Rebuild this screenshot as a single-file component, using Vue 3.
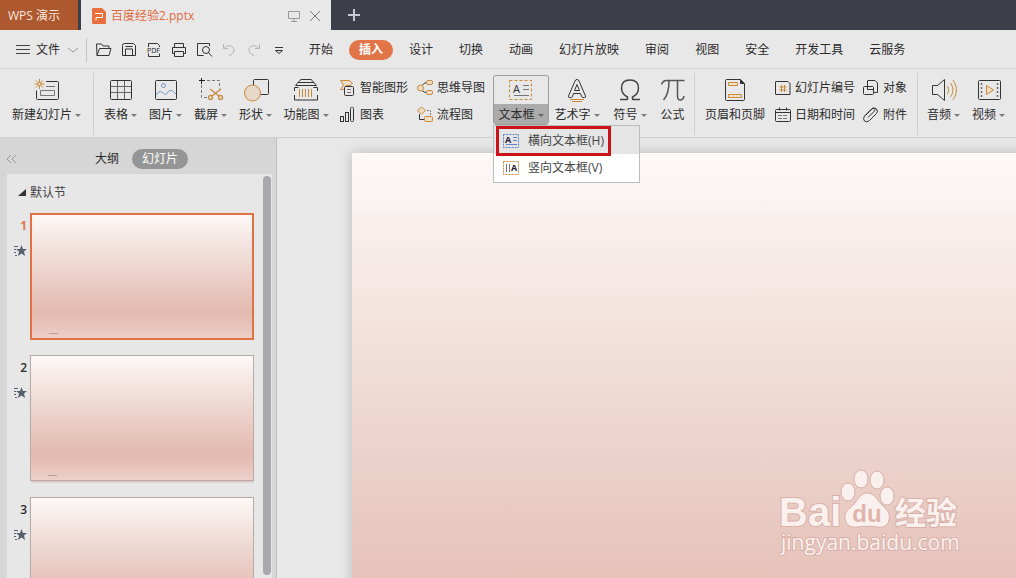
<script setup>
const menuTabs = ['开始', '插入', '设计', '切换', '动画', '幻灯片放映', '审阅', '视图', '安全', '开发工具', '云服务']
const quickTools = [
  { icon: 'open', label: '打开' },
  { icon: 'save', label: '保存' },
  { icon: 'pdf', label: '输出为PDF' },
  { icon: 'print', label: '打印' },
  { icon: 'preview', label: '打印预览' },
  { icon: 'undo', label: '撤消' },
  { icon: 'redo', label: '恢复' },
  { icon: 'more', label: '自定义' }
]
const insertTools = [
  { icon: 'table', label: '表格' },
  { icon: 'picture', label: '图片' },
  { icon: 'clip', label: '截屏' },
  { icon: 'shape', label: '形状' },
  { icon: 'widget', label: '功能图', wide: true }
]
const diagramTools = [
  [{ icon: 'smart', label: '智能图形' }, { icon: 'chart', label: '图表' }],
  [{ icon: 'mind', label: '思维导图' }, { icon: 'flow', label: '流程图' }]
]
const pageTools = [
  [{ icon: 'number', label: '幻灯片编号' }, { icon: 'date', label: '日期和时间' }],
  [{ icon: 'object', label: '对象' }, { icon: 'attach', label: '附件' }]
]
const mediaTools = [
  { icon: 'audio', label: '音频' },
  { icon: 'video', label: '视频' }
]
const slides = [1, 2, 3]

const o = 'stroke="#c98a3c"'
const large = {
  newslide: `<path d="M13 5.5h11.500q1 0 1 1v16q0 1-1 1h-20q-1 0-1-1v-8"/><path d="M13 10.500h9" stroke="#777"/><path d="M7.500 14.500h14v5h-14z" stroke="#777"/><path d="M6.500 3v10M1.500 8h10M3 4.500l7 7M10 4.500l-7 7" ${o}/><circle cx="6.500" cy="8" r="1.500" fill="#fff3df" ${o}/>`,
  table: `<rect x="3.500" y="4.500" width="21" height="19" rx="1"/><path d="M10.500 5v18M17.500 5v18M4 10.500h20M4 16.500h20" stroke="#666"/>`,
  picture: `<rect x="3.500" y="4.500" width="21" height="19" rx="1"/><circle cx="11.500" cy="9.500" r="2" stroke="#6e8fc9"/><path d="M4 19c3-4 5-4 7-2s3 2 5-1 4-2 8 2" stroke="#6e8fc9"/>`,
  clip: `<path d="M10 4.500h12.500v8M4.500 9v12.500h6" stroke="#777" stroke-dasharray="3 2"/><path d="M4.500 2v6M2 4.500h6" stroke="#222"/><g stroke="#c98a3c" stroke-width="1.300"><circle cx="13.500" cy="21.500" r="2"/><circle cx="23.500" cy="21.500" r="2"/><path d="M15 20l9-7M22 20l-9-7"/></g>`,
  shape: `<rect x="11.500" y="3.500" width="15" height="15" rx="1"/><circle cx="10.500" cy="17" r="8" fill="#e6d8c8" ${o}/>`,
  widget: `<path d="M8.500 3.500h11M6 6.500h16M6 6.500l3-3M22 6.500l-3-3M3.500 9.500h21M3.500 9.500l2.500-3M24.500 9.500l-2.500-3M2.500 15v-3.500h4M25.500 15v-3.500h-4M2.500 19v5h4M25.500 19v5h-4M6 24h16"/><path d="M7.500 13v8M10.500 13v8M13.500 13v8M16.500 13v8M19.500 13v8" ${o}/>`,
  textbox: `<rect x="2.500" y="4.500" width="22" height="19" stroke-dasharray="3 2" ${o}/><text x="6" y="17" font-size="11" fill="#333" stroke="none">A</text><path d="M16 9.500h6M16 13.500h6M7 19.500h15" stroke="#777"/>`,
  wordart: `<path d="M14 3.500q1.500 0 2 1.500l6.500 15q.5 1.500-1 1.500h-1.500q-1 0-1.500-1l-1-3h-7l-1 3q-.5 1-1.500 1H6.500q-1.500 0-1-1.500L12 5q.5-1.500 2-1.500z"/><path d="M14 8.500l-2.500 6h5z"/><path d="M7 23.500h14M9 25.500h10" ${o}/>`,
  symbol: `<path d="M4 23.500h7q.5 0 .5-.5v-2q-6-3-6-9 0-8 8.500-8t8.500 8q0 6-6 9v2q0 .5.500.5h7" stroke="#444" stroke-width="1.500"/>`,
  formula: `<path d="M2.500 8.500q1.500-4 5-4h18M10 5q0 13-5.500 19M18.500 5v15q0 4.500 3.500 4 2.500-.5 3-4" stroke="#555" stroke-width="1.500"/>`,
  header: `<path d="M5.500 3.500h14l4 4v16q0 1-1 1h-17q-1 0-1-1v-19q0-1 1-1z"/><path d="M19.500 3.500v4h4z" fill="#333"/><path d="M7.500 6.500h9v3h-9zM7.500 18.500h13v3h-13z" fill="#f3dfc4" ${o}/>`,
  audio: `<path d="M2.500 9.500h5l7-6v21l-7-6h-5z" stroke-linejoin="round"/><path d="M17.500 10q2.500 4 0 8M20.500 7q5 7 0 14M23 4q7 10 0 20" ${o}/>`,
  video: `<rect x="3.500" y="4.500" width="22" height="19" rx="1"/><path d="M6.500 7v15M22.500 7v15" stroke="#667" stroke-width="1.500" stroke-dasharray="2 2"/><path d="M11.500 9.500l7 4.500-7 4.500z" fill="#f3dfc4" ${o}/>`
}
const small = {
  smart: `<path d="M1.500 1.500h9l3 3-2.500 2H7v4H1.500l3-4.500z" fill="#f0dfc8" ${o}/><rect x="5.500" y="7.500" width="9" height="9" rx="1" fill="#e8e8e8"/><path d="M8 10.500h4M8 13.500h4" stroke="#777"/>`,
  chart: `<rect x="1.500" y="10.500" width="3" height="5"/><rect x="6.500" y="6.500" width="3" height="9"/><rect x="11.500" y="1.500" width="3" height="14" rx="1"/>`,
  mind: `<path d="M6 6.500q2-3 5-3M6 11.500q2 2 5 2"/><circle cx="4.500" cy="9" r="3" fill="#f0dfc8" ${o}/><rect x="10.500" y="1.500" width="6" height="4" rx="1.500" fill="#f0dfc8" ${o}/><rect x="10.500" y="11.500" width="6" height="4" rx="1.500" fill="#f0dfc8" ${o}/>`,
  flow: `<path d="M3.500 8v5.500h5"/><path d="M11 4.500h3.500v6" stroke="#777" stroke-dasharray="2 1"/><path d="M5.500 1l4 3.500-4 3.500-4-3.500z" fill="#f0dfc8" ${o}/><rect x="8.500" y="10.500" width="8" height="5" rx="1" fill="#f0dfc8" ${o}/>`,
  number: `<path d="M2 2.500h12l2 2v11.000H2q-.5 0-.5-.500v-12q0-.5.500-.5z"/><path d="M7.500 6v7M10.500 6v7M5.500 8h7M5.500 11h7" ${o}/>`,
  date: `<rect x="1.500" y="3.500" width="15" height="12" rx="1"/><path d="M2 6.500h14M5.500 1.500v3M12.500 1.500v3"/><path d="M4 9.500h10M4 12.500h10" stroke="#777" stroke-dasharray="4 1"/>`,
  object: `<path d="M5.500 7v-5q0-.5.500-.5h7l2.500 2.500v9.500h-4"/><rect x="1.500" y="7.500" width="10" height="8" rx="1"/><path d="M5.500 7.500v3h6"/>`,
  attach: `<path d="M3.500 9.500l6.500-6.500q2.500-2 4.500 0t0 4.500l-7 7q-3 2.500-5 .5t0-5l7.500-7.500q1.500-1 2.500 0t0 2.500l-6.500 6.500"/>`,
  boxH: `<rect x="1.500" y="2.500" width="15" height="13" stroke="#5d82c4" stroke-dasharray="2 1"/><text x="3" y="11" font-size="9" font-weight="bold" fill="#223" stroke="none">A</text><path d="M11 5.500h4M11 8.500h4M4 12.500h11" stroke="#5d82c4"/>`,
  boxV: `<rect x="1.500" y="2.500" width="15" height="13" ${o} stroke-dasharray="2 1"/><path d="M4.500 5v8M7.500 5v8" stroke="#777"/><text x="9" y="12" font-size="9" font-weight="bold" fill="#223" stroke="none">A</text>`,
  burger: `<path d="M1 4.500h14M1 8.500h14M1 12.500h14" stroke="#444"/>`,
  chevron: `<path d="M4 7l5 4 5-4" stroke="#999"/>`,
  open: `<path d="M2 14.500l-.5-11.500h5l1.500 2h6v2.500M2 14.500h12l2-7H4.500z" stroke-linejoin="round"/>`,
  save: `<path d="M4.500 2.500h9l2 2v10h-13v-10q0-2 2-2z" stroke-linejoin="round"/><path d="M5.500 14v-6h7v6M5.500 5.500h7"/>`,
  pdf: `<path d="M3.500 6v-3.500h9l2 2V6M3.500 12.500v3h11v-3"/><text x="2" y="12" font-size="7" fill="#222" stroke="none">PDF</text>`,
  print: `<path d="M4.500 6v-3.500h9V6M4.500 12.500h-2v-6h13v6h-2M4.500 10.500h9v5h-9z" stroke-linejoin="round"/>`,
  preview: `<path d="M14.500 5v-2.500h-12v12h6"/><circle cx="11" cy="9" r="3.500"/><path d="M13.500 11.500l3.500 4"/>`,
  undo: `<path d="M3.500 3v4.500h4.500M4 7c4-4 10-2 10 2 0 3-2 4.500-5 5.500" stroke="#b5b5b5"/>`,
  redo: `<path d="M14.500 3v4.500h-4.500M14 7c-4-4-10-2-10 2 0 3 2 4.500 5 5.500" stroke="#b5b5b5"/>`,
  more: `<path d="M5 6.500h8M5.500 9.500l3.500 3 3.500-3z"/>`
}
</script>

<template>
  <div class="app">
    <header class="titlebar">
      <button class="home">WPS 演示</button>
      <div class="doc">
        <svg class="doc-logo" viewBox="0 0 14 16" width="14" height="16" aria-hidden="true">
          <path d="M1 0h9l4 4v11q0 1-1 1H1q-1 0-1-1V1q0-1 1-1z" fill="#e96f3c" />
          <path d="M3 5.500h7.500v4H4v3" fill="none" stroke="#fff" />
        </svg>
        <span class="doc-name">百度经验2.pptx</span>
        <button class="plain" aria-label="放映">
          <svg viewBox="0 0 12 12" width="12" height="12" class="line grey"><path d="M.5 1.500h11v7H.5zM6 9v2.500M3 11.500h6" /></svg>
        </button>
        <button class="plain" aria-label="关闭">
          <svg viewBox="0 0 12 12" width="12" height="12" class="line dim"><path d="M1 1l10 10M11 1L1 11" /></svg>
        </button>
      </div>
      <button class="plain add" aria-label="新建">
        <svg viewBox="0 0 12 12" width="12" height="12" class="line light"><path d="M6 0v12M0 6h12" /></svg>
      </button>
    </header>

    <nav class="menubar">
      <button class="file">
        <svg viewBox="0 0 16 18" width="16" height="18" class="line" v-html="small.burger" />
        文件
        <svg viewBox="0 0 18 18" width="18" height="18" class="line" v-html="small.chevron" />
      </button>
      <div class="quick">
        <button v-for="t in quickTools" :key="t.icon" class="plain" :aria-label="t.label">
          <svg viewBox="0 0 18 18" width="18" height="18" class="line" v-html="small[t.icon]" />
        </button>
      </div>
      <button v-for="t in menuTabs" :key="t" class="tab" :class="{ active: t === '插入' }">{{ t }}</button>
    </nav>

    <section class="ribbon">
      <div class="group first">
        <button class="big">
          <svg viewBox="0 0 28 28" class="line" v-html="large.newslide" />
          <span class="label drop">新建幻灯片</span>
        </button>
      </div>
      <div class="group insert">
        <button v-for="t in insertTools" :key="t.icon" class="big" :class="{ wide: t.wide }">
          <svg viewBox="0 0 28 28" class="line" v-html="large[t.icon]" />
          <span class="label drop">{{ t.label }}</span>
        </button>
        <div v-for="(col, i) in diagramTools" :key="i" class="column">
          <button v-for="t in col" :key="t.icon" class="row">
            <svg viewBox="0 0 18 18" class="line" v-html="small[t.icon]" />{{ t.label }}
          </button>
        </div>
        <div class="menu-host">
          <button class="big textbox" aria-haspopup="menu" aria-expanded="true">
            <svg viewBox="0 0 28 28" class="line" v-html="large.textbox" />
            <span class="label drop">文本框</span>
          </button>
          <div class="menu" role="menu">
            <button role="menuitem" class="item hot">
              <span class="marked"><svg viewBox="0 0 18 18" class="line" v-html="small.boxH" />横向文本框(H)</span>
            </button>
            <button role="menuitem" class="item">
              <span class="content"><svg viewBox="0 0 18 18" class="line" v-html="small.boxV" />竖向文本框(V)</span>
            </button>
          </div>
        </div>
        <button class="big wide">
          <svg viewBox="0 0 28 28" class="line" v-html="large.wordart" />
          <span class="label drop">艺术字</span>
        </button>
        <button class="big mid">
          <svg viewBox="0 0 28 28" class="line" v-html="large.symbol" />
          <span class="label drop">符号</span>
        </button>
        <button class="big narrow">
          <svg viewBox="0 0 28 28" class="line" v-html="large.formula" />
          <span class="label">公式</span>
        </button>
      </div>
      <div class="group page">
        <button class="big header">
          <svg viewBox="0 0 28 28" class="line" v-html="large.header" />
          <span class="label">页眉和页脚</span>
        </button>
        <div v-for="(col, i) in pageTools" :key="i" class="column">
          <button v-for="t in col" :key="t.icon" class="row">
            <svg viewBox="0 0 18 18" class="line" v-html="small[t.icon]" />{{ t.label }}
          </button>
        </div>
      </div>
      <div class="group media">
        <button v-for="t in mediaTools" :key="t.icon" class="big">
          <svg viewBox="0 0 28 28" class="line" v-html="large[t.icon]" />
          <span class="label drop">{{ t.label }}</span>
        </button>
      </div>
    </section>

    <main class="work">
      <aside class="panel">
        <div class="panel-head">
          <button class="plain collapse" aria-label="收起">
            <svg viewBox="0 0 12 10" width="12" height="10" class="line grey"><path d="M5 1L1 5l4 4M10 1L6 5l4 4" /></svg>
          </button>
          <button class="plain outline">大纲</button>
          <button class="plain pill">幻灯片</button>
        </div>
        <div class="list">
          <div class="thumbs">
            <button class="plain section">
              <svg viewBox="0 0 8 8" width="8" height="8"><path d="M8 0v7H0z" fill="#333" /></svg>默认节
            </button>
            <div v-for="n in slides" :key="n" class="entry" :class="{ current: n === 1 }">
              <div class="meta">
                <span>{{ n }}</span>
                <svg viewBox="0 0 14 12" width="14" height="12" aria-hidden="true">
                  <path d="M8.500 0l1.500 4h4l-3 2.500 1 4.500-3.500-2.500L5 11l1-4.500L3 4h4z" fill="#566070" />
                  <path d="M1 1.500h4M1 4.500h2M1 7.500h2M2 10.500h2" stroke="#566070" />
                </svg>
              </div>
              <button class="thumb paper" :aria-label="'幻灯片 ' + n"><i /></button>
            </div>
          </div>
          <div class="scroll" />
        </div>
      </aside>
      <div class="stage">
        <div class="slide paper" />
        <svg class="watermark" viewBox="0 0 190 92" width="190" height="92">
          <g fill="#faf1ef" stroke="#d8b0a8" stroke-width="1">
            <g class="brand">
              <text x="1" y="58" font-size="40">Bai</text>
              <ellipse cx="70" cy="24" rx="7" ry="9" />
              <ellipse cx="83" cy="11" rx="7" ry="9" />
              <ellipse cx="99" cy="12" rx="7" ry="9" />
              <ellipse cx="109" cy="28" rx="7" ry="9" />
              <path d="M89 25c7 0 10 6 14 11 5 5 10 9 8 16-1 6-6 8-11 7-7-1-14-1-21 0-6 1-11-2-12-8-1-7 4-10 8-14 5-5 7-12 14-12z" />
            </g>
            <text class="du" x="89" y="54" font-size="24" text-anchor="middle">du</text>
            <text class="cjk" x="117" y="56" font-size="31">经验</text>
            <text class="url" x="3" y="82" font-size="21">jingyan.baidu.com</text>
          </g>
        </svg>
      </div>
    </main>
  </div>
</template>

<style>
body { margin: 0; }
</style>

<style scoped>
.app {
  display: flex;
  flex-direction: column;
  height: 100vh;
  overflow: hidden;
  background: #e8e8e8;
  color: #2b2b2b;
  font: 12px/20px "Open Sans", "Noto Sans CJK SC", sans-serif;
}
button {
  margin: 0;
  padding: 0;
  border: 0;
  background: none;
  color: inherit;
  font: inherit;
  white-space: nowrap;
}
svg { display: block; flex: none; }
.line { fill: none; stroke: #333; }
.grey { stroke: #999; }
.dim { stroke: #777; }
.light { stroke: #c8c9cf; stroke-width: 2; }

.titlebar { display: flex; flex: none; height: 30px; background: #3c3e49; }
.home { width: 78px; padding: 2px 10px 0 0; background: #ae5830; color: #f6e6dd; }
.doc {
  display: flex;
  align-items: center;
  gap: 9px;
  box-sizing: border-box;
  width: 250px;
  margin-left: 3px;
  padding: 2px 10px 0 11px;
  background: #e8e8e9;
  color: #df6a3c;
}
.doc-logo { margin-right: -4px; }
.doc-name { flex: 1; }
.add { margin-left: 17px; }

.menubar {
  display: flex;
  flex: none;
  align-items: center;
  box-sizing: border-box;
  height: 39px;
  padding-top: 2px;
  border-bottom: 1px solid #d2d2d2;
}
.file { display: flex; align-items: center; gap: 5px; padding-left: 15px; }
.file svg:last-child { margin-left: -1px; }
.quick {
  display: flex;
  align-items: center;
  gap: 7px;
  height: 24px;
  margin: 0 8px 0 4px;
  padding-left: 8px;
  border-left: 1px solid #c4c4c4;
}
.tab { height: 20px; margin: 0 3px; padding: 0 10px; border-radius: 10px; }
.tab.active { background: #e27548; color: #fff; font-weight: bold; }

.ribbon {
  display: flex;
  flex: none;
  height: 68px;
  border-bottom: 1px solid #cfcfcf;
}
.group { display: flex; margin-top: 4px; height: 62px; }
.group + .group { border-left: 1px solid #cfcfcf; }
.first { width: 93px; justify-content: center; }
.insert { padding-left: 4px; }
.big {
  display: flex;
  flex-direction: column;
  align-items: center;
  width: 45px;
  height: 52px;
  padding-top: 3px;
}
.big svg { width: 28px; height: 28px; }
.wide { width: 56px; }
.mid { width: 50px; }
.narrow { width: 35px; }
.label { display: flex; align-items: center; padding-top: 1px; }
.drop::after {
  content: "";
  margin-left: 3px;
  border: 3px solid transparent;
  border-top-color: #7c7c7c;
  border-bottom: 0;
}
.column { display: flex; flex-direction: column; padding: 1px 0 0 5px; }
.column + .column { padding-left: 8px; }
.row { display: flex; align-items: center; gap: 3px; height: 27px; }
.row svg { width: 18px; height: 18px; }

.menu-host { position: relative; margin-left: 8px; }
.textbox {
  box-sizing: border-box;
  width: 56px;
  height: 50px;
  margin-top: 2px;
  padding-top: 0;
  overflow: hidden;
  border: 1px solid #9d9d9d;
  border-radius: 3px;
}
.textbox .label { justify-content: center; width: 100%; background: #ababab; }
.textbox .drop::after { border-top-color: #666; }
.menu {
  position: absolute;
  top: 52px;
  left: 0;
  z-index: 2;
  width: 145px;
  border: 1px solid #bcbcbc;
  background: #fff;
}
.item { display: flex; width: 100%; height: 28px; color: #444; }
.hot { background: #e5e5e5; }
.marked, .content { display: flex; align-items: center; gap: 8px; height: 24px; }
.marked { margin-left: 2px; padding-right: 4px; border: 3px solid #cb1218; }
.content { padding: 2px 0 0 8px; }
.marked svg { margin-left: 3px; }
.marked svg, .content svg { width: 18px; height: 18px; }

.page { margin-left: 4px; }
.header { width: 60px; margin-left: 10px; }
.page .column { padding-left: 9px; }
.page .column + .column { padding-left: 7px; }
.media { margin-left: 10px; padding-left: 3px; }

.work { display: flex; flex: 1; min-height: 0; }
.panel {
  display: flex;
  flex: none;
  flex-direction: column;
  width: 276px;
  border-right: 1px solid #bfbfbf;
  background: #d6d6d6;
}
.panel-head { display: flex; align-items: center; height: 36px; padding: 5px 0 0 6px; box-sizing: border-box; }
.outline { margin-left: 77px; }
.pill { margin-left: 13px; padding: 0 10px; border-radius: 10px; background: #959595; color: #fff; }
.list {
  display: flex;
  flex: 1;
  justify-content: space-between;
  min-height: 0;
  margin: 0 4px 0 7px;
  padding-right: 1px;
  background: #e7e7e7;
}
.thumbs { overflow: hidden; padding-left: 7px; }
.section { display: flex; align-items: center; gap: 4px; height: 34px; padding: 3px 0 0 4px; box-sizing: border-box; color: #444; }
.entry { display: flex; gap: 3px; height: 127px; margin: 5px 0 15px; }
.entry + .entry { margin-top: 0; }
.meta {
  display: flex;
  flex-direction: column;
  align-items: flex-end;
  gap: 9px;
  width: 13px;
  padding-top: 3px;
  font-weight: 600;
}
.current .meta { color: #e27548; font-weight: bold; }
.paper { background: linear-gradient(#fdf9f8, #f3e2dd 27%, #e9cbc3 56%, #e3baaf 78%, #e5beb4 84%, #edd2cb); }
.thumb {
  display: flex;
  align-items: flex-end;
  box-sizing: border-box;
  width: 224px;
  height: 126px;
  border: 1px solid #b9a9a9;
  background-origin: border-box;
  box-shadow: 1px 1px 2px #dcb9b1;
}
.current .thumb { height: 127px; border: 2px solid #df7145; box-shadow: none; }
.thumb i { width: 9px; height: 1px; margin: 0 0 4px 17px; background: #c09f98; }
.scroll { width: 8px; margin: 2px 0 3px; border-radius: 4px; background: #a9a9ad; }

.stage { position: relative; flex: 1; min-width: 0; overflow: hidden; padding: 15px 0 0 75px; background: #e8e8e8; }
.slide { width: 1136px; aspect-ratio: 16 / 9; box-shadow: 0 0 12px #b8b8b8; }
.watermark { position: absolute; right: 48px; bottom: 18px; }
.watermark text { paint-order: stroke; stroke-width: 2px; }
.brand text { font-family: "Liberation Sans", sans-serif; font-weight: bold; }
.watermark .du { fill: #dfb5ab; stroke: none; font-family: "Liberation Sans", sans-serif; font-weight: bold; }
.cjk { font-family: "Noto Sans CJK SC", sans-serif; font-weight: bold; }
.url { font-family: "Open Sans", sans-serif; }
</style>
